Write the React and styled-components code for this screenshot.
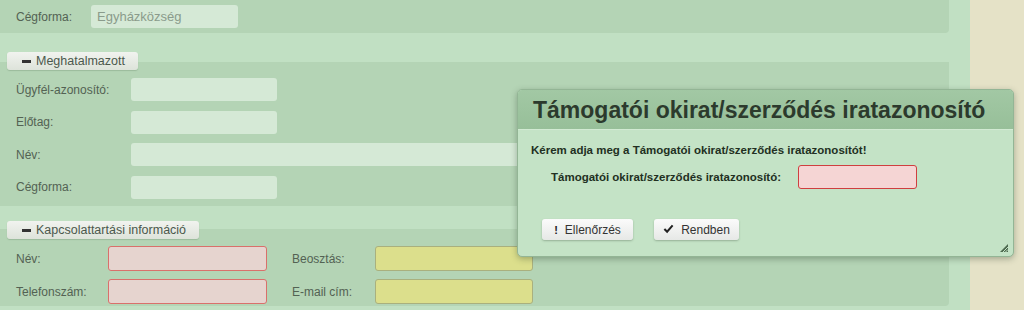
import styled, { createGlobalStyle } from "styled-components";

const GlobalStyle = createGlobalStyle`
  html, body {
    margin: 0;
    padding: 0;
    width: 1024px;
    height: 310px;
    overflow: hidden;
    background: #c1e0c3;
    font-family: "Liberation Sans", Arial, sans-serif;
  }
`;

function App() {
  return (
    <>
      <GlobalStyle />
      <Page>
        <Main>
          <Panel $pad="5px 0" $height={33}>
            <Row>
              <Label $width={75}>Cégforma:</Label>
              <Input $width={147} $height={23} placeholder="Egyházközség" readOnly />
            </Row>
          </Panel>

          <Legend $top={19} $overlap={8}>
            <Minus />
            Meghatalmazott
          </Legend>
          <Panel $pad="16px 0 0" $height={144} $gap={9.5}>
            <Row>
              <Label $width={115}>Ügyfél-azonosító:</Label>
              <Input $width={146} $height={23} readOnly />
            </Row>
            <Row>
              <Label $width={115}>Előtag:</Label>
              <Input $width={146} $height={23} readOnly />
            </Row>
            <Row>
              <Label $width={115}>Név:</Label>
              <Input $width={440} $height={23} readOnly />
            </Row>
            <Row>
              <Label $width={115}>Cégforma:</Label>
              <Input $width={146} $height={23} readOnly />
            </Row>
          </Panel>

          <Legend $top={15} $overlap={10}>
            <Minus />
            Kapcsolattartási információ
          </Legend>
          <Panel $pad="17px 0 0" $height={77} $gap={8}>
            <Row>
              <Label $width={92}>Név:</Label>
              <Input $width={159} $height={25} $variant="error" readOnly />
              <Label $width={83} $indent={25}>Beosztás:</Label>
              <Input $width={158} $height={25} $variant="warn" readOnly />
            </Row>
            <Row>
              <Label $width={92}>Telefonszám:</Label>
              <Input $width={159} $height={25} $variant="error" readOnly />
              <Label $width={83} $indent={25}>E-mail cím:</Label>
              <Input $width={158} $height={25} $variant="warn" readOnly />
            </Row>
          </Panel>
        </Main>
        <Strip />
      </Page>

      <Dialog>
        <TitleBar>Támogatói okirat/szerződés iratazonosító</TitleBar>
        <DialogBody>
          <Prompt>Kérem adja meg a Támogatói okirat/szerződés iratazonosítót!</Prompt>
          <DialogRow>
            <DialogLabel>Támogatói okirat/szerződés iratazonosító:</DialogLabel>
            <DialogInput readOnly />
          </DialogRow>
          <Buttons>
            <Button $width={91}>
              <Bang>!</Bang>
              Ellenőrzés
            </Button>
            <Button $width={85}>
              <Check viewBox="0 0 12 12">
                <path d="M1.5 6.5 L4.5 9.5 L10.5 2.5" fill="none" stroke="#222" strokeWidth="2.2" />
              </Check>
              Rendben
            </Button>
          </Buttons>
        </DialogBody>
        <Grip viewBox="0 0 8 8">
          <path d="M8 0 L8 8 L0 8 Z" fill="#4d6a4f" />
          <path d="M8 3 L3 8" stroke="#c4e3c6" strokeWidth="1" />
          <path d="M8 5.5 L5.5 8" stroke="#c4e3c6" strokeWidth="1" />
        </Grip>
      </Dialog>
    </>
  );
}

export default App;

const Page = styled.div`
  display: flex;
  width: 1024px;
  height: 310px;
`;

const Main = styled.div`
  width: 949px;
  padding-right: 21px;
  display: flex;
  flex-direction: column;
`;

const Strip = styled.div`
  flex: 1;
  background: #e5e2c7;
`;

const Panel = styled.div`
  box-sizing: border-box;
  height: ${(p) => p.$height}px;
  padding: ${(p) => p.$pad};
  background: #b4d4b5;
  border-radius: 0 0 4px 0;
  display: flex;
  flex-direction: column;
  gap: ${(p) => p.$gap || 0}px;
`;

const Row = styled.div`
  display: flex;
  align-items: center;
`;

const Label = styled.span`
  box-sizing: border-box;
  width: ${(p) => p.$width + 16}px;
  padding-left: 16px;
  margin-left: ${(p) => (p.$indent ? p.$indent - 16 : 0)}px;
  font-size: 12px;
  color: #536253;
`;

const inputColors = {
  plain: { bg: "#d5e9d6", border: "transparent" },
  error: { bg: "#e6d4cf", border: "#d9706b" },
  warn: { bg: "#dcdf8c", border: "#a9b07e" },
};

const Input = styled.input`
  box-sizing: border-box;
  width: ${(p) => p.$width}px;
  height: ${(p) => p.$height}px;
  margin: 0;
  padding: 0 5px;
  border: 1px solid ${(p) => inputColors[p.$variant || "plain"].border};
  border-radius: 3px;
  background: ${(p) => inputColors[p.$variant || "plain"].bg};
  font-family: inherit;
  font-size: 13px;
  color: #8a9b8b;
  outline: none;
  &::placeholder {
    color: #8a9b8b;
  }
`;

const Legend = styled.div`
  position: relative;
  z-index: 1;
  align-self: flex-start;
  margin: ${(p) => p.$top}px 0 -${(p) => p.$overlap}px 7px;
  height: 18px;
  padding: 0 13px 0 15px;
  display: flex;
  align-items: center;
  gap: 5px;
  box-sizing: border-box;
  background: linear-gradient(#f1f3ef, #dde3da);
  border-radius: 3px;
  box-shadow: 0 1px 1px rgba(80, 110, 80, 0.25);
  font-size: 12.5px;
  color: #4b584c;
`;

const Minus = styled.span`
  width: 9px;
  height: 3px;
  background: #333;
  display: inline-block;
`;

const Dialog = styled.div`
  position: absolute;
  left: 517px;
  top: 89px;
  width: 497px;
  height: 168px;
  box-sizing: border-box;
  border: 1px solid #93b595;
  border-radius: 5px;
  background: #c4e3c6;
  box-shadow: 0 2px 6px rgba(40, 60, 40, 0.35);
  overflow: hidden;
`;

const TitleBar = styled.div`
  height: 40px;
  box-sizing: border-box;
  padding: 2px 15px 0;
  display: flex;
  align-items: center;
  background: linear-gradient(#a2c8a4, #97bf99);
  border-bottom: 1px solid #d2ead3;
  font-size: 23px;
  font-weight: bold;
  color: #2c3a2d;
`;

const DialogBody = styled.div`
  padding: 14px 14px 0 13px;
`;

const Prompt = styled.div`
  font-size: 11.5px;
  font-weight: bold;
  color: #223022;
`;

const DialogRow = styled.div`
  display: flex;
  align-items: center;
  margin-top: 9px;
  padding-left: 20px;
`;

const DialogLabel = styled.span`
  width: 247px;
  font-size: 11.5px;
  font-weight: bold;
  color: #223022;
`;

const DialogInput = styled.input`
  box-sizing: border-box;
  width: 119px;
  height: 24px;
  margin: 0;
  border: 1px solid #cf3f3f;
  border-radius: 3px;
  background: #f5d5d4;
  outline: none;
`;

const Buttons = styled.div`
  display: flex;
  gap: 21px;
  margin-top: 30px;
  padding-left: 11px;
`;

const Button = styled.button`
  width: ${(p) => p.$width}px;
  height: 21px;
  box-sizing: border-box;
  padding: 0;
  display: flex;
  align-items: center;
  justify-content: center;
  gap: 7px;
  border: none;
  border-radius: 3px;
  background: linear-gradient(#fbfbfb, #e6e8e6);
  box-shadow: 0 1px 2px rgba(60, 80, 60, 0.35);
  font-family: inherit;
  font-size: 12px;
  color: #333;
`;

const Bang = styled.span`
  font-weight: bold;
  font-size: 11px;
  color: #222;
`;

const Check = styled.svg`
  width: 11px;
  height: 11px;
  margin-top: -3px;
`;

const Grip = styled.svg`
  position: absolute;
  right: 5px;
  bottom: 4px;
  width: 8px;
  height: 8px;
`;
